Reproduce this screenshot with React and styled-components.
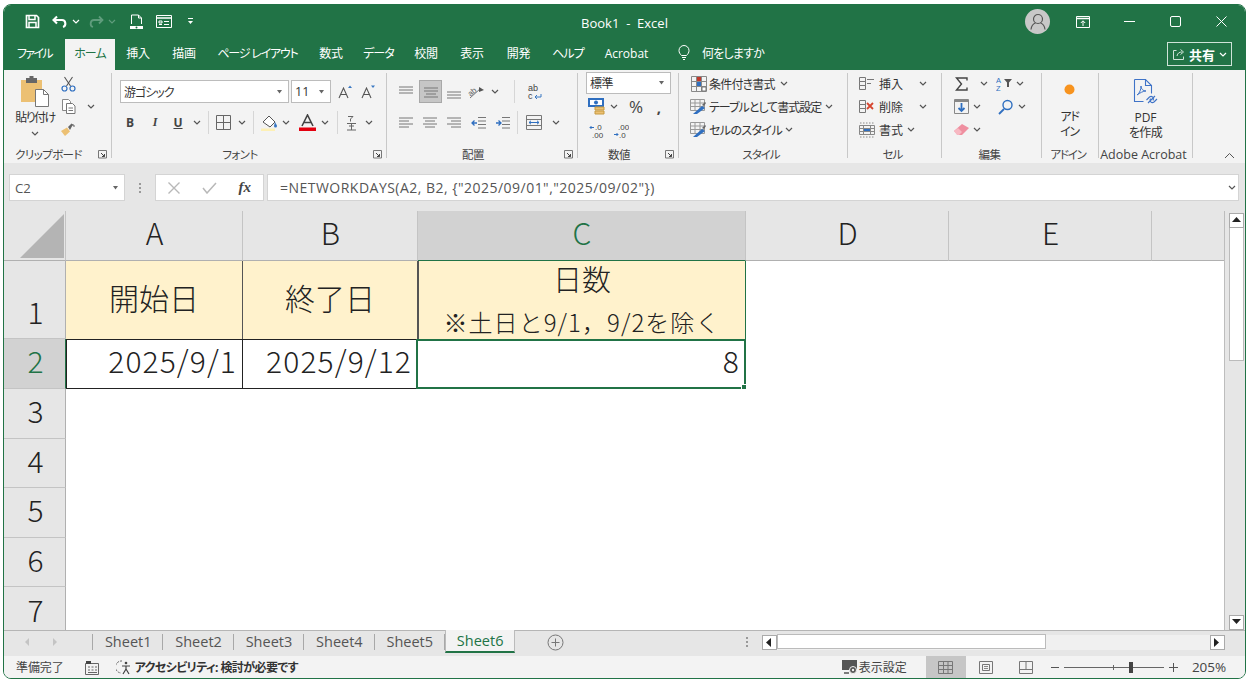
import React from "react";
import styled, { createGlobalStyle } from "styled-components";

const UI = '"Open Sans", "Noto Sans CJK JP", sans-serif';
const CELL = '"Noto Sans CJK JP", "Noto Sans", sans-serif';

const Global = createGlobalStyle`
  html, body { margin: 0; padding: 0; background: #fff; overflow: hidden; }
  body { width: 1249px; height: 681px; font-family: ${UI}; font-feature-settings: "palt"; }
  svg { display: block; flex: none; }
`;

const Win = styled.div`
  box-sizing: border-box; width: 1243px; height: 675px; margin: 4px 0 0 3px;
  border: 1px solid #217346; border-radius: 8px; overflow: hidden;
  display: flex; flex-direction: column; background: #f3f3f3;
`;
const TitleBar = styled.div`
  height: 33px; flex: none; background: #217346; display: flex; align-items: center; color: #fff; position: relative;
`;
const Qat = styled.div`display: flex; align-items: center; padding-left: 21px; flex: 1;`;
const Slot = styled.div`
  flex: none; width: ${p => p.$w || 16}px; margin-left: ${p => p.$ml || 0}px; height: 100%;
  display: flex; align-items: center; justify-content: center;
`;
const Tx = styled.span`flex: none; margin-left: ${p => p.$ml ?? 0}px; letter-spacing: ${p => p.$sp ?? 0}px;`;
const BookTitle = styled.div`
  position: absolute; left: 0; right: 0; top: 9px; text-align: center; font-size: 13px; color: #fff; pointer-events: none;
`;
const WinBtns = styled.div`display: flex; align-items: center; height: 100%; padding-right: 1px;`;
const Avatar = styled.div`
  width: 25px; height: 25px; border-radius: 50%; background: #c8c8c8; display: flex; align-items: center; justify-content: center; margin-right: 10px;
`;

const TabBar = styled.div`
  height: 32px; flex: none; background: #217346; display: flex; align-items: stretch; color: #fff; font-size: 12px; position: relative;
`;
const Tab = styled.div`
  flex: none; width: ${p => p.$w}px; display: flex; align-items: center; justify-content: center;
  letter-spacing: ${p => p.$sp ?? 0}px; padding-bottom: 3px; box-sizing: border-box; white-space: nowrap;
  margin-top: 1px;
  ${p => p.$on && "background:#f3f3f3;color:#217346;"}
`;
const Tell = styled.div`display: flex; align-items: center; gap: 12px; margin-left: 19px; padding-bottom: 3px; letter-spacing: -.8px;`;
const Share = styled.div`
  position: absolute; right: 13px; top: 4px; width: 65px; height: 24px; box-sizing: border-box;
  border: 1px solid #cfe3d8; display: flex; align-items: center; justify-content: center; gap: 4px;
  font-size: 13px; font-weight: 700; letter-spacing: 0;
`;

const Ribbon = styled.div`
  height: 93px; flex: none; background: #f3f3f3; display: flex; color: #333; font-size: 12px; position: relative;
`;
const Group = styled.div`
  flex: none; width: ${p => p.$w}px; box-sizing: border-box; height: 85px; margin-top: 3px;
  ${p => !p.$last && "border-right: 1px solid #c8c8c8;"}
  display: flex; flex-direction: column;
`;
const Body = styled.div`
  flex: 1; min-height: 0; display: flex; flex-direction: column;
  margin-top: ${p => p.$mt ?? 0}px;
  padding: ${p => p.$pt ?? 0}px 0 0 ${p => p.$pl ?? 0}px; gap: ${p => p.$gap ?? 0}px;
`;
const BodyRow = styled.div`flex: 1; min-height: 0; display: flex; padding-left: ${p => p.$pl ?? 0}px;`;
const Label = styled.div`
  flex: none; height: 16px; margin-bottom: -4px; display: grid; grid-template-columns: 1fr auto 1fr; align-items: center;
  font-size: ${p => p.$fs ?? 11.5}px; color: #444; padding-right: ${p => p.$launch ? 18 : 4}px; letter-spacing: ${p => p.$sp ?? -.6}px; white-space: nowrap;
`;
const Launcher = styled.div`justify-self: end; grid-column: 3; margin-right: -14px;`;
const Row = styled.div`
  display: flex; align-items: center; height: ${p => p.$h ?? 23}px; flex: none;
  letter-spacing: ${p => p.$sp ?? 0}px; white-space: nowrap;
`;
const Combo = styled.div`
  box-sizing: border-box; width: ${p => p.$w}px; height: ${p => p.$h ?? 23}px; margin-right: ${p => p.$mr ?? 0}px; flex: none;
  background: #fff; border: 1px solid #bcbcbc; display: flex; align-items: center; justify-content: space-between;
  padding: 0 5px 0 3px; font-size: ${p => p.$fs ?? 12}px; letter-spacing: ${p => p.$sp ?? 0}px; color: #333;
`;
const Sel = styled.div`
  width: 23px; height: 23px; box-sizing: border-box; background: #c6c6c6; border: 1px solid #a8a8a8;
  display: flex; align-items: center; justify-content: center; margin-left: ${p => p.$ml ?? 0}px; flex: none;
`;
const VSep = styled.div`width: 1px; height: 23px; background: #d6d6d6; flex: none; margin-left: ${p => p.$ml ?? 0}px; margin-right: ${p => p.$mr ?? 0}px;`;
const BoldTx = styled.span`font-weight: ${p => p.$w ?? 700}; font-size: ${p => p.$fs ?? 12}px; color: #444; font-family: ${p => p.$serif ? '"Liberation Serif", serif' : UI}; font-style: ${p => p.$i ? "italic" : "normal"}; text-decoration: ${p => p.$u ? "underline" : "none"};`;
const Big = styled.div`
  flex: none; width: ${p => p.$w}px; display: flex; flex-direction: column; align-items: center; text-align: center;
  font-size: 12px; line-height: 15px; letter-spacing: ${p => p.$sp ?? -.7}px; color: #333; padding-top: ${p => p.$pt ?? 0}px; white-space: nowrap;
`;
const Gutter = styled.div`height: ${p => p.$h}px; flex: none;`;
const Collapse = styled.div`position: absolute; right: 10px; bottom: 4px;`;

const FormulaBar = styled.div`
  height: 48px; flex: none; background: #e6e6e6; display: flex; padding: 11px 6px 10px 5px; box-sizing: border-box; align-items: stretch;
`;
const Fbox = styled.div`
  flex: ${p => p.$grow ? 1 : "none"}; width: ${p => p.$w ? p.$w + "px" : "auto"}; box-sizing: border-box; background: #fff; border: 1px solid #d4d4d4;
  margin-left: ${p => p.$ml ?? 0}px; display: flex; align-items: center; font-size: ${p => p.$fs ?? 13.2}px; letter-spacing: ${p => p.$sp ?? 0}px; color: #555; white-space: nowrap;
  ${p => p.$between && "justify-content: space-between;"} padding: 0 ${p => p.$pr ?? 5}px 0 ${p => p.$pl ?? 6}px;
`;
const Dots = styled.div`
  width: ${p => p.$w ?? 4}px; flex: none; display: flex; flex-direction: column; justify-content: center; align-items: center; gap: 2px; margin-left: ${p => p.$ml ?? 0}px;
  span { width: 2px; height: 2px; background: #999; display: block; }
`;

const Sheet = styled.div`height: 419px; flex: none; display: flex; background: #e6e6e6;`;
const Grid = styled.div`
  width: 1220px; flex: none; display: grid; background: #fff;
  grid-template-columns: 62px 177px 175px 328px 203px 203px 1fr;
  grid-template-rows: 50px 78px 50px 50px 49px 50px 49px 1fr;
  border-right: 1px solid #bdbdbd; box-sizing: content-box;
  font-feature-settings: normal;
`;
const Corner = styled.div`background: #e6e6e6; border-right: 1px solid #c4c4c4; border-bottom: 1px solid #b0b0b0; box-sizing: border-box; display: flex; justify-content: flex-end; align-items: flex-end; padding: 0 1px 2px 0;`;
const ColHead = styled.div`
  background: ${p => p.$on ? "#d2d2d2" : "#e6e6e6"}; color: ${p => p.$on ? "#217346" : "#222"};
  border-right: ${p => p.$plain ? "none" : "1px solid #c4c4c4"}; border-bottom: 1px solid ${p => p.$on ? "#217346" : "#b0b0b0"}; box-sizing: border-box;
  display: flex; align-items: center; justify-content: center; font: 300 30px ${CELL}; padding: 0 0 7px 1px;
`;
const RowHead = styled.div`
  background: ${p => p.$on ? "#d2d2d2" : "#e6e6e6"}; color: ${p => p.$on ? "#217346" : "#222"};
  border-right: 1px solid ${p => p.$on ? "#217346" : "#b0b0b0"}; border-bottom: 1px solid #c4c4c4; box-sizing: border-box;
  display: flex; align-items: center; justify-content: center; font: 300 30px ${CELL}; padding: 0 0 7px 2px;
  ${p => p.$low && "align-items: flex-end; padding-bottom: 5px;"}
`;
const HeadCell = styled.div`
  background: #fff2cc; box-sizing: border-box; border-right: 1px solid ${p => p.$sel ? "#217346" : "#555"};
  display: flex; flex-direction: column; align-items: center; justify-content: center; font: 300 30px ${CELL}; color: #222; padding-bottom: ${p => p.$sel ? 0 : 6}px;
  ${p => p.$sel && "border-left:1px solid #555;"}
`;
const HeadTop = styled.div`font-size: 29px; line-height: 36px; margin-top: -4px;`;
const HeadSub = styled.div`font-size: 24px; line-height: 30px; margin-top: 11px; white-space: nowrap; letter-spacing: 1.05px;`;
const DataCell = styled.div`
  background: #fff; box-sizing: border-box; border: solid #222; border-width: 1px 1px 1px ${p => p.$first ? 1 : 0}px;
  display: flex; align-items: center; justify-content: flex-end; padding-right: 5px; padding-bottom: 9px;
  font: 300 30px ${CELL}; letter-spacing: 1.1px; color: #222; position: relative;
`;
const Selection = styled.div`
  position: absolute; inset: -1px -1px -1px -2px; border: 2px solid #217346; pointer-events: none;
  &::after { content: ""; position: absolute; right: -3px; bottom: -3px; width: 4px; height: 4px; background: #217346; border: 1px solid #fff; }
`;
const Blank = styled.div`background: #fff;`;

const VScroll = styled.div`
  width: 21px; flex: none; display: flex; flex-direction: column; align-items: center; padding: 2px 0 0 1px; box-sizing: border-box;
`;
const ScrollBtn = styled.div`
  width: ${p => p.$w ?? 15}px; height: 15px; box-sizing: border-box; background: #fff; border: 1px solid #aaa; display: flex; align-items: center; justify-content: center; flex: none;
`;
const VThumb = styled.div`width: 15px; height: 133px; background: #fff; border: 1px solid #bbb; box-sizing: border-box; border-top: 0; flex: none;`;
const VTrack = styled.div`flex: 1; width: 15px;`;

const SheetTabs = styled.div`
  height: 26px; flex: none; background: #e6e6e6; border-top: 1px solid #b5b5b5; box-sizing: border-box; display: flex; align-items: stretch; font-size: 14.5px; color: #555;
`;
const Nav = styled.div`width: 89px; flex: none; display: flex; align-items: center; gap: 22px; padding-left: 21px; box-sizing: border-box; border-right: 1px solid #a8a8a8; margin: 3px 0 6px;`;
const STab = styled.div`
  flex: none; width: 70.4px; box-sizing: border-box; margin-top: 0; display: flex; align-items: center; justify-content: center;
  padding-bottom: 4px; position: relative;
  ${p => p.$on ? `color:#217346;background:#f3f3f3;border-bottom:2px solid #217346;height:23px;border-left:1px solid #bbb;border-right:1px solid #bbb;margin-top:-1px;padding-bottom:0;` : `&::after{content:"";position:absolute;right:0;top:3px;bottom:6px;width:1px;background:#a8a8a8;}`}
`;
const AddTab = styled.div`margin-left: 32px; width: 18px; display: flex; align-items: center; padding-bottom: 2px;`;
const HScroll = styled.div`
  margin-left: auto; width: 480px; flex: none; display: flex; align-items: center; padding-bottom: 3px; margin-right: 20px;
`;
const HTrack = styled.div`flex: 1; height: 15px; background: #f0f0f0; display: flex; border-top: 1px solid #e6e6e6;`;
const HThumb = styled.div`width: 269px; height: 15px; box-sizing: border-box; background: #fff; border: 1px solid #bbb; margin-top: -1px;`;

const Status = styled.div`
  flex: 1; min-height: 0; background: #f3f3f3; display: flex; align-items: center; font-size: 12px; color: #444; white-space: nowrap;
`;
const StatusText = styled.div`margin-left: ${p => p.$ml ?? 0}px; letter-spacing: ${p => p.$sp ?? 0}px; font-size: ${p => p.$fs ?? 12}px; font-weight: ${p => p.$b ? 700 : 400}; color: ${p => p.$b ? "#333" : "#444"};`;
const ViewBtn = styled.div`
  width: 40px; height: 100%; display: flex; align-items: center; justify-content: center; flex: none; ${p => p.$on && "background:#c6c6c6;"}
`;
const Slider = styled.div`
  width: 100px; height: 1px; background: #666; position: relative; margin: 0 5px 0 4px; flex: none;
  &::before { content: ""; position: absolute; left: 49px; top: -2px; width: 1px; height: 5px; background: #666; }
  &::after { content: ""; position: absolute; left: 65px; top: -5px; width: 4px; height: 11px; background: #444; }
`;

const I = ({ w = 16, h = 16, children }) => <svg width={w} height={h} viewBox={`0 0 ${w} ${h}`} fill="none">{children}</svg>;
const Chev = ({ c = "#555" }) => <I w={8} h={5}><path d="M1 1l3 3 3-3" stroke={c} strokeWidth="1.2" /></I>;
const Down = ({ c = "#666" }) => <I w={7} h={4}><path d="M1 0h5L3.500 3.500z" fill={c} /></I>;
const Launch = () => <I w={9} h={9}><path d="M.5 8V.5H8.500V8z" stroke="#777" /><path d="M3 3l3.500 3.500M6.500 4v2.500H4" stroke="#444" /></I>;
const hl = (y, x1, x2, c = "#777") => <path key={y + "-" + x1} d={`M${x1} ${y}H${x2}`} stroke={c} />;

const Save = () => <I w={15} h={15}><path d="M1.500 1.500h10l2 2v10h-12z" stroke="#fff" strokeWidth="1.700" /><path d="M4 1.500v4h6v-4M4 13.500v-5h7v5" stroke="#fff" strokeWidth="1.500" /></I>;
const Undo = ({ c = "#fff" }) => <I w={16} h={14}><path d="M5 1.500L1.500 5 5 8.500M2 5h8c4 0 4.500 6 1 7" stroke={c} strokeWidth="2.100" /></I>;
const Redo = () => <I w={16} h={14}><path d="M11 1.500L14.500 5 11 8.500M14 5H6c-4 0-4.500 6-1 7" stroke="#5f9c7c" strokeWidth="1.800" /></I>;
const Preview = () => <I w={13} h={16}><path d="M1.500 10V1h7l3 3v6M8.500 1v3h3" stroke="#fff" /><path d="M0 12h13v3H0z" fill="#fff" /><circle cx="6.500" cy="13.500" r="1" fill="#217346" /></I>;
const FormI = () => <I w={16} h={13}><path d="M.5.500h15v12H.5z" stroke="#fff" /><path d="M1 3h14" stroke="#fff" strokeWidth="1.500" /><path d="M3 6h3v2H3zM3 9.500h3M8 6.500h5M8 9.500h5" stroke="#fff" /></I>;
const QatMore = () => <I w={7} h={7}><path d="M1 .5h5" stroke="#fff" /><path d="M1 3h5L3.500 6z" fill="#fff" /></I>;
const User = () => <I w={16} h={17}><circle cx="8" cy="6" r="4.500" stroke="#555" strokeWidth="1.200" /><path d="M1 16.500c.5-4 3-6 4.500-6.500M15 16.500c-.5-4-3-6-4.500-6.500" stroke="#555" strokeWidth="1.200" /></I>;
const Display = () => <I w={14} h={12}><path d="M.5.500h13v11H.5z" stroke="#fff" /><path d="M1 2.500h12" stroke="#fff" strokeWidth="1.400" /><path d="M7 10V5M4.800 7L7 4.800 9.200 7" stroke="#fff" /></I>;
const Min = () => <I w={11} h={3}><path d="M0 1.500h11" stroke="#fff" /></I>;
const Max = () => <I w={11} h={11}><rect x=".5" y=".5" width="10" height="10" rx="1.500" stroke="#fff" /></I>;
const Close = () => <I w={11} h={11}><path d="M.5.500l10 10M10.500.500l-10 10" stroke="#fff" /></I>;
const Bulb = () => <I w={12} h={17}><path d="M3.500 11.500C2 10 1 8.500 1 6.500a5 5 0 0110 0c0 2-1 3.500-2.500 5zM4 13.500h4M5 15.500h2" stroke="#fff" /></I>;
const ShareI = () => <I w={13} h={13}><path d="M4.500 2.500h-3v9h10v-3M5 8c.5-3 2.500-4 5-4M8.500 1.500L11.500 4 8.500 6.500" stroke="#cfe3d8" /></I>;

const Paste = () => <I w={30} h={31}><path d="M1 4h21v22H1z" fill="#ecc073" /><path d="M6 2h11v5H6z" fill="#666" /><path d="M9.500 0h4v3h-4z" fill="#666" /><path d="M15.500 13.500h8l5 5v12h-13z" fill="#fff" stroke="#777" /><path d="M23.500 13.500v5h5" stroke="#777" /></I>;
const Cut = () => <I w={15} h={16}><path d="M3.500 1l6 9M11.500 1l-6 9" stroke="#555" strokeWidth="1.100" /><circle cx="3.500" cy="12.500" r="2.500" stroke="#2f6fc0" strokeWidth="1.200" /><circle cx="11.500" cy="12.500" r="2.500" stroke="#2f6fc0" strokeWidth="1.200" /></I>;
const Copy = () => <I w={15} h={15}><path d="M1.500.5h6l2 2v9h-8z" fill="#fff" stroke="#888" /><path d="M5.500 4.500h6l2.500 2.500v7.500H5.500z" fill="#fff" stroke="#777" />{hl(9, 7.5, 12)}{hl(11.5, 7.5, 12)}</I>;
const Brush = () => <I w={16} h={14}><path d="M1 8l6-3.500 3 4L5 13z" fill="#ecc073" /><path d="M8 4l3.500-3.500 1.500 1L10 7z" fill="#666" /><path d="M13 1v2M15 3h-2" stroke="#666" /></I>;
const AGrow = ({ up }) => <I w={14} h={14}><path d="M1 13L5.500 3 10 13M2.800 9.500h5.500" stroke="#555" strokeWidth="1.100" /><path d={up ? "M10 3l2-2.500L14 3z" : "M10 .5h4L12 3z"} fill="#3a78c2" /></I>;
const Borders = () => <I w={15} h={15}><path d="M.5.500h14v14H.5zM7.500 1v13M1 7.500h13" stroke="#666" /></I>;
const Fill = () => <I w={18} h={17}><path d="M2 8l6-6 6 6-5 5z" stroke="#555" fill="#fff" /><path d="M14 8c1 2 2 3 2 4a1.500 1.500 0 01-3 0" fill="#3a78c2" /><path d="M0 14.500h14V17H0z" fill="#fdf0b5" /></I>;
const FontColor = () => <I w={17} h={17}><path d="M3 12L8.500 1 14 12M5 8.500h7" stroke="#444" strokeWidth="1.600" /><path d="M0 13.500h17V17H0z" fill="#e3000f" /></I>;
const Phon = () => <I w={11} h={16}><path d="M2 1.500h5L4.500 4M4.500 4v2.500M1 8.500h9M3 11h5M1 15h9M5.500 8.500V15" stroke="#666" /></I>;

const Lines = ({ ys, xs }) => <I w={16} h={14}>{ys.map((y, i) => <path key={i} d={`M${xs[i][0]} ${y}H${xs[i][1]}`} stroke="#777" />)}</I>;
const Full = [1, 15];
const OrientI = () => <I w={18} h={15}><text x="1" y="10" fontSize="8" fill="#666" fontFamily="Liberation Sans" transform="rotate(-40 6 8)">ab</text><path d="M3 14L14 4" stroke="#777" /><path d="M12 3l5 3-5 2z" fill="#555" /></I>;
const Wrap = () => <I w={16} h={18}><text x="1" y="7.500" fontSize="9" fill="#444" fontFamily="Liberation Sans">ab</text><text x="1" y="16" fontSize="9" fill="#444" fontFamily="Liberation Sans">c</text><path d="M14 11v3H8M10 12l-2 2 2 2" stroke="#3a78c2" /></I>;
const Indent = ({ out }) => <I w={16} h={14}><path d="M7 1.500h8M7 5h8M7 8.500h8M7 12h8" stroke="#777" /><path d={out ? "M6 7H1M3.500 4.500L1 7l2.500 2.500" : "M1 7h5M3.500 4.500L6 7 3.500 9.500"} stroke="#2f6fc0" strokeWidth="1.300" /></I>;
const Merge = () => <I w={16} h={15}><path d="M.5.500h15v14H.5zM1 4.500h14M1 10.500h14" stroke="#777" /><path d="M3 7.500h10M5 5.800L3 7.500l2 1.700M11 5.800l2 1.700-2 1.700" stroke="#2f6fc0" /></I>;
const Account = () => <I w={17} h={17}><path d="M0 0h16v9H0z" fill="#2f6fc0" /><path d="M2 2h12v5H2z" fill="#fff" /><circle cx="8" cy="4.500" r="2" fill="#2f6fc0" /><path d="M7 9h9v3H7zM7 13h9v3H7z" fill="#ecc073" stroke="#c69a40" /></I>;
const Dec = ({ top, bot, left }) => <I w={16} h={16}><text x={left ? 6 : 5} y="7" fontSize="8" fill="#444" fontFamily="Liberation Sans">{top}</text><text x={left ? 3 : 6} y="14.500" fontSize="8" fill="#444" fontFamily="Liberation Sans">{bot}</text><path d={left ? "M5 4.500H1M2.500 3L1 4.500 2.500 6" : "M1 11.500h4M3.500 10L5 11.500 3.500 13"} stroke="#2f6fc0" /></I>;
const Cond = () => <I w={16} h={16}><path d="M.5.500h15v15H.5zM1 5.500h14M1 10.500h14M5.500 1v14M10.500 1v14" stroke="#888" /><path d="M6 1h4v4H6z" fill="#c0392b" /><path d="M6 6h4v4H6z" fill="#2f6fc0" /><path d="M11 11h4v4h-4z" fill="#fff" stroke="#777" /></I>;
const TableI = () => <I w={17} h={16}><path d="M.5.500h14v11H.5zM1 4h13M1 7.500h13M5 1v10M10 1v10" stroke="#999" /><path d="M3 15l9-8 3 2-8 6z" fill="#2f6fc0" /><path d="M12 6l3-3 1 1-2 3z" fill="#666" /></I>;
const CellI = ({ kind }) => <I w={16} h={16}><path d="M.5 1.500h6v4h-6zM.5 5.500h6v4h-6zM.5 9.500h6v4h-6z" stroke="#777" />{kind === "ins" ? <path d="M8 3.500h7M8 7.500h4" stroke="#777" /> : <path d="M8 4l6 6M14 4l-6 6" stroke="#d6452f" strokeWidth="1.800" />}</I>;
const FormatI = () => <I w={16} h={16}><path d="M.5 3.500h15v9H.5zM.5 6.500h15M.5 9.500h15M4.500 3v10M11.500 3v10" stroke="#888" /><path d="M5 7h6v2H5z" fill="#2f6fc0" /><path d="M1 1h14M1 15h14" stroke="#888" strokeDasharray="1.500 1.500" /></I>;
const Sigma = () => <I w={13} h={14}><path d="M12 3.500V1H1.500l5 6-5 6H12v-2.500" stroke="#444" strokeWidth="1.400" /></I>;
const SortI = () => <I w={17} h={16}><text x="0" y="7" fontSize="7.500" fill="#2f6fc0" fontFamily="Liberation Sans">A</text><text x="0" y="15" fontSize="7.500" fill="#2f6fc0" fontFamily="Liberation Sans">Z</text><path d="M8 3h8l-3 3.500V11h-2V6.500z" fill="#555" /></I>;
const FillDown = () => <I w={15} h={15}><path d="M.5.500h14v14H.5z" stroke="#888" /><path d="M1 1h13v2H1z" fill="#888" /><path d="M7.500 4v8M4.500 9l3 3 3-3" stroke="#2f6fc0" strokeWidth="1.800" /></I>;
const Find = () => <I w={15} h={16}><circle cx="9.500" cy="6" r="4.500" stroke="#2f6fc0" strokeWidth="1.400" /><path d="M6 10l-5 5" stroke="#2f6fc0" strokeWidth="1.800" /></I>;
const Eraser = () => <I w={15} h={13}><path d="M0 8l8-7 7 4-7 7H4z" fill="#ef8fa0" /><path d="M0 8l4-3 4 4-3 3H3z" fill="#f7b8c2" /></I>;
const PdfI = () => <I w={27} h={28}><path d="M2.500 1.500h11l6 6v8M2.500 1.500v22h9" stroke="#3f73c7" strokeWidth="1.100" /><path d="M13.500 1.500v6h6" stroke="#3f73c7" strokeWidth="1.100" /><path d="M5 17c3-2 4-6 4-9 0 3 2 5 5 5-3 0-6 2-9 4z" stroke="#3f73c7" /><path d="M16 25l7-7M14.500 22l3-3a2.500 2.500 0 013.500 3.500M25 21l-3 3a2.500 2.500 0 01-3.500-3.500" stroke="#3f73c7" strokeWidth="1.100" /></I>;
const Triangle = () => <I w={44} h={44}><path d="M44 0v44H0z" fill="#b4b4b4" /></I>;
const Fx = () => <BoldTx $serif $i $w={700} $fs={15}>fx</BoldTx>;
const Xm = () => <I w={14} h={14}><path d="M1.500 1.500l11 11M12.500 1.500l-11 11" stroke="#b8b8b8" strokeWidth="1.400" /></I>;
const Ck = () => <I w={15} h={12}><path d="M1 6l4 5L14 1" stroke="#b8b8b8" strokeWidth="1.500" /></I>;
const Tri = ({ d, c = "#222" }) => {
  const m = { up: "M0 6h9L4.500 1z", down: "M0 1h9L4.500 6z", left: "M6 0v9L1 4.500z", right: "M1 0v9l5-4.500z" };
  return <I w={9} h={9}><path d={m[d]} fill={c} /></I>;
};
const NavA = ({ r }) => <I w={5} h={8}><path d={r ? "M1 0v8l4-4z" : "M4 0v8L0 4z"} fill="#c4c4c4" /></I>;
const Plus = () => <I w={17} h={17}><circle cx="8.500" cy="8.500" r="7.500" stroke="#777" /><path d="M4.500 8.500h8M8.500 4.500v8" stroke="#777" /></I>;
const Macro = () => <I w={14} h={15}><path d="M.5 3.500h13v11H.5z" stroke="#666" /><path d="M1 1h5v3H1z" fill="#444" /><path d="M3 7h2M6.500 7h2M10 7h2M3 10h2M6.500 10h2M10 10h2M3 12.500h9" stroke="#666" /></I>;
const Access = () => <I w={16} h={15}><path d="M6 1a6 6 0 00-1 12" stroke="#666" strokeDasharray="2 1" /><circle cx="10" cy="3" r="1.300" fill="#444" /><path d="M6 6h8M10 6v3l-3 5M10 9l3 5" stroke="#444" strokeWidth="1.200" /></I>;
const DispSet = () => <I w={17} h={15}><path d="M0 0h15v10H0z" fill="#555" /><circle cx="11" cy="10" r="3.500" fill="#555" stroke="#f3f3f3" /><circle cx="11" cy="10" r="1.200" fill="#f3f3f3" /><path d="M2 13h5" stroke="#555" strokeWidth="1.500" /></I>;
const VNormal = () => <I w={15} h={13}><path d="M.5.500h14v12H.5zM.5 4.500h14M.5 8.500h14M5.500 1v12M10 1v12" stroke="#777" /></I>;
const VPage = () => <I w={14} h={13}><path d="M.5.500h13v12H.5z" stroke="#777" /><path d="M3.500 3.500h7v6h-7z" stroke="#777" /><path d="M5 5.500h4M5 7.500h4" stroke="#888" /></I>;
const VBreak = () => <I w={14} h={13}><path d="M.5.500h13v12H.5zM.5 8.500h13M7 1v7" stroke="#777" /></I>;
const Up = () => <I w={11} h={7}><path d="M1 6l4.500-4.500L10 6" stroke="#555" /></I>;

const tabs = [
  ["ファイル", 61, -1.6], ["ホーム", 50, -.9, true], ["挿入", 46], ["描画", 46], ["ページ レイアウト", 101, -1.2], ["数式", 46],
  ["データ", 49, -.9], ["校閲", 46], ["表示", 46], ["開発", 47], ["ヘルプ", 52, -.9], ["Acrobat", 65, 0],
];

export default function App() {
  return (
    <>
      <Global />
      <Win>
        <TitleBar>
          <Qat>
            <Slot $w={15}><Save /></Slot>
            <Slot $w={16} $ml={12}><Undo /></Slot>
            <Slot $w={8} $ml={4}><Chev c="#fff" /></Slot>
            <Slot $w={16} $ml={8}><Redo /></Slot>
            <Slot $w={8} $ml={4}><Chev c="#5f9c7c" /></Slot>
            <Slot $w={13} $ml={14}><Preview /></Slot>
            <Slot $w={16} $ml={13}><FormI /></Slot>
            <Slot $w={7} $ml={15}><QatMore /></Slot>
          </Qat>
          <BookTitle>Book1&nbsp; -&nbsp; Excel</BookTitle>
          <WinBtns>
            <Avatar><User /></Avatar>
            <Slot $w={46}><Display /></Slot>
            <Slot $w={46}><Min /></Slot>
            <Slot $w={46}><Max /></Slot>
            <Slot $w={46}><Close /></Slot>
          </WinBtns>
        </TitleBar>

        <TabBar>
          {tabs.map(([t, w, sp, on]) => <Tab key={t} $w={w} $sp={sp ?? -.3} $on={on}>{t}</Tab>)}
          <Tell><Bulb /><span>何をしますか</span></Tell>
          <Share><ShareI /><span>共有</span><Chev c="#fff" /></Share>
        </TabBar>

        <Ribbon>
          <Group $w={108}>
            <BodyRow $pl={8}>
              <Big $w={46} $pt={3} $sp={-1.5}>
                <Paste />
                <Gutter $h={3} />
                貼り付け
                <Gutter $h={6} />
                <Chev />
              </Big>
              <Body $mt={-1}>
                <Row><Slot $w={16} $ml={2}><Cut /></Slot></Row>
                <Row><Slot $w={16} $ml={2}><Copy /></Slot><Slot $w={8} $ml={11}><Chev /></Slot></Row>
                <Row><Slot $w={16} $ml={2}><Brush /></Slot></Row>
              </Body>
            </BodyRow>
            <Label $launch><span /><span>クリップボード</span><Launcher><Launch /></Launcher></Label>
          </Group>

          <Group $w={275}>
            <Body $pt={7} $pl={8} $gap={8}>
              <Row>
                <Combo $w={169} $mr={2} $sp={-1}>游ゴシック<Down /></Combo>
                <Combo $w={40} $fs={12.5}>11<Down /></Combo>
                <Slot $w={14} $ml={7}><AGrow up /></Slot>
                <Slot $w={14} $ml={9}><AGrow /></Slot>
              </Row>
              <Row>
                <Slot $w={20}><BoldTx $fs={12}>B</BoldTx></Slot>
                <Slot $w={20} $ml={5}><BoldTx $fs={12} $serif $i>I</BoldTx></Slot>
                <Slot $w={16} $ml={5}><BoldTx $fs={12} $u>U</BoldTx></Slot>
                <Slot $w={8} $ml={7}><Chev /></Slot>
                <VSep $ml={7} $mr={7} />
                <Slot $w={15}><Borders /></Slot>
                <Slot $w={8} $ml={7}><Chev /></Slot>
                <VSep $ml={7} $mr={7} />
                <Slot $w={18}><Fill /></Slot>
                <Slot $w={8} $ml={3}><Chev /></Slot>
                <Slot $w={17} $ml={9}><FontColor /></Slot>
                <Slot $w={8} $ml={5}><Chev /></Slot>
                <VSep $ml={8} $mr={8} />
                <Slot $w={11}><Phon /></Slot>
                <Slot $w={8} $ml={8}><Chev /></Slot>
              </Row>
            </Body>
            <Label $launch><span /><span>フォント</span><Launcher><Launch /></Launcher></Label>
          </Group>

          <Group $w={191}>
            <Body $pt={7} $pl={11} $gap={8}>
              <Row>
                <Slot $w={16}><Lines ys={[2, 5, 8]} xs={[Full, Full, Full]} /></Slot>
                <Sel $ml={5}><Lines ys={[3, 6, 9, 12]} xs={[Full, Full, [3, 13], Full]} /></Sel>
                <Slot $w={16} $ml={4}><Lines ys={[7, 10, 13]} xs={[Full, Full, Full]} /></Slot>
                <Slot $w={18} $ml={5}><OrientI /></Slot>
                <Slot $w={8} $ml={6}><Chev /></Slot>
                <VSep $ml={15} $mr={12} />
                <Slot $w={16}><Wrap /></Slot>
              </Row>
              <Row>
                <Slot $w={16}><Lines ys={[2, 5, 8, 11]} xs={[Full, [1, 11], Full, [1, 11]]} /></Slot>
                <Slot $w={16} $ml={8}><Lines ys={[2, 5, 8, 11]} xs={[Full, [3, 13], Full, [3, 13]]} /></Slot>
                <Slot $w={16} $ml={8}><Lines ys={[2, 5, 8, 11]} xs={[Full, [5, 15], Full, [5, 15]]} /></Slot>
                <Slot $w={16} $ml={9}><Indent out /></Slot>
                <Slot $w={16} $ml={8}><Indent /></Slot>
                <VSep $ml={6} $mr={8} />
                <Slot $w={16}><Merge /></Slot>
                <Slot $w={8} $ml={10}><Chev /></Slot>
              </Row>
            </Body>
            <Label $launch><span /><span>配置</span><Launcher><Launch /></Launcher></Label>
          </Group>

          <Group $w={101}>
            <Body $pl={8} $mt={-1}>
              <Combo $w={85} $h={22} $sp={-.5}>標準<Down /></Combo>
              <Row $h={25}>
                <Slot $w={17} $ml={2}><Account /></Slot>
                <Slot $w={8} $ml={5}><Chev /></Slot>
                <Slot $w={16} $ml={10}><BoldTx $w={400} $fs={17}>%</BoldTx></Slot>
                <Slot $w={8} $ml={11}><BoldTx $fs={15}>,</BoldTx></Slot>
              </Row>
              <Row>
                <Slot $w={16} $ml={3}><Dec top=".0" bot=".00" left /></Slot>
                <Slot $w={16} $ml={8}><Dec top=".00" bot=".0" /></Slot>
              </Row>
            </Body>
            <Label $launch><span /><span>数値</span><Launcher><Launch /></Launcher></Label>
          </Group>

          <Group $w={169}>
            <Body $pl={11} $mt={-1}>
              <Row><Slot $w={16} $ml={1}><Cond /></Slot><Tx $ml={2} $sp={-.8}>条件付き書式</Tx><Slot $w={8} $ml={5}><Chev /></Slot></Row>
              <Row><Slot $w={17}><TableI /></Slot><Tx $ml={2} $sp={-1}>テーブルとして書式設定</Tx><Slot $w={8} $ml={4}><Chev /></Slot></Row>
              <Row><Slot $w={17}><TableI /></Slot><Tx $ml={2} $sp={-.6}>セルのスタイル</Tx><Slot $w={8} $ml={3}><Chev /></Slot></Row>
            </Body>
            <Label $sp={-1}><span /><span>スタイル</span></Label>
          </Group>

          <Group $w={94}>
            <Body $pl={11} $mt={-1}>
              <Row><Slot $w={16}><CellI kind="ins" /></Slot><Slot $w={24} $ml={4}>挿入</Slot><Slot $w={8} $ml={16}><Chev /></Slot></Row>
              <Row><Slot $w={16}><CellI /></Slot><Slot $w={24} $ml={4}>削除</Slot><Slot $w={8} $ml={16}><Chev /></Slot></Row>
              <Row><Slot $w={16}><FormatI /></Slot><Slot $w={24} $ml={4}>書式</Slot><Slot $w={8} $ml={4}><Chev /></Slot></Row>
            </Body>
            <Label $sp={-1}><span /><span>セル</span></Label>
          </Group>

          <Group $w={100}>
            <Body $pl={12} $mt={-1}>
              <Row><Slot $w={15}><Sigma /></Slot><Slot $w={8} $ml={11}><Chev /></Slot><Slot $w={17} $ml={8}><SortI /></Slot><Slot $w={8} $ml={3}><Chev /></Slot></Row>
              <Row><Slot $w={15}><FillDown /></Slot><Slot $w={8} $ml={4}><Chev /></Slot><Slot $w={15} $ml={17}><Find /></Slot><Slot $w={8} $ml={5}><Chev /></Slot></Row>
              <Row><Slot $w={15}><Eraser /></Slot><Slot $w={8} $ml={4}><Chev /></Slot></Row>
            </Body>
            <Label><span /><span>編集</span></Label>
          </Group>

          <Group $w={57}>
            <Body>
              <Big $w={55} $pt={11} $sp={-1.3}>
                <I w={11} h={11}><circle cx="5.500" cy="5.500" r="5" fill="#f7931e" /></I>
                <Gutter $h={14} />
                アド
                <br />
                イン
              </Big>
            </Body>
            <Label $sp={-1.2}><span /><span>アドイン</span></Label>
          </Group>

          <Group $w={94}>
            <Body>
              <Big $w={93} $pt={5} $sp={0}>
                <PdfI />
                <Gutter $h={4} />
                PDF
                <Tx $sp={-.6}>を作成</Tx>
              </Big>
            </Body>
            <Label $sp={0} $fs={12.5}><span /><span>Adobe Acrobat</span></Label>
          </Group>
          <Collapse><Up /></Collapse>
        </Ribbon>

        <FormulaBar>
          <Fbox $w={116} $between $pr={5} $pl={5}><span>C2</span><Down /></Fbox>
          <Dots $w={30}><span /><span /><span /></Dots>
          <Fbox $w={109} $pl={11} $pr={12} $between><Xm /><Ck /><Fx /></Fbox>
          <Fbox $grow $ml={3} $between $pl={12} $pr={2} $fs={14} $sp={.48}>
            <span>=NETWORKDAYS(A2, B2, {'{'}"2025/09/01","2025/09/02"{'}'})</span><Chev />
          </Fbox>
        </FormulaBar>

        <Sheet>
          <Grid>
            <Corner><Triangle /></Corner>
            <ColHead>A</ColHead>
            <ColHead>B</ColHead>
            <ColHead $on>C</ColHead>
            <ColHead>D</ColHead>
            <ColHead>E</ColHead>
            <ColHead $plain />

            <RowHead $low>1</RowHead>
            <HeadCell>開始日</HeadCell>
            <HeadCell>終了日</HeadCell>
            <HeadCell $sel>
              <HeadTop>日数</HeadTop>
              <HeadSub>※土日と9/1，9/2を除く</HeadSub>
            </HeadCell>
            <Blank /><Blank /><Blank />

            <RowHead $on>2</RowHead>
            <DataCell $first>2025/9/1</DataCell>
            <DataCell>2025/9/12</DataCell>
            <DataCell>8<Selection /></DataCell>
            <Blank /><Blank /><Blank />

            {[3, 4, 5, 6, 7].map(n => (
              <React.Fragment key={n}>
                <RowHead>{n}</RowHead>
                <Blank /><Blank /><Blank /><Blank /><Blank /><Blank />
              </React.Fragment>
            ))}
          </Grid>
          <VScroll>
            <ScrollBtn><Tri d="up" /></ScrollBtn>
            <VThumb />
            <VTrack />
            <ScrollBtn><Tri d="down" /></ScrollBtn>
          </VScroll>
        </Sheet>

        <SheetTabs>
          <Nav><NavA /><NavA r /></Nav>
          {["Sheet1", "Sheet2", "Sheet3", "Sheet4", "Sheet5"].map(s => <STab key={s}>{s}</STab>)}
          <STab $on>Sheet6</STab>
          <AddTab><Plus /></AddTab>
          <HScroll>
            <Dots $w={4}><span /><span /><span /></Dots>
            <Slot $w={13} />
            <ScrollBtn><Tri d="left" /></ScrollBtn>
            <HTrack><HThumb /></HTrack>
            <ScrollBtn><Tri d="right" /></ScrollBtn>
          </HScroll>
        </SheetTabs>

        <Status>
          <StatusText $ml={12} $sp={-.1}>準備完了</StatusText>
          <Slot $w={14} $ml={21}><Macro /></Slot>
          <Slot $w={16} $ml={17}><Access /></Slot>
          <StatusText $ml={3} $b $sp={-.6}>アクセシビリティ: 検討が必要です</StatusText>
          <Slot $w={17} $ml={544}><DispSet /></Slot>
          <StatusText>表示設定</StatusText>
          <Slot $w={19} />
          <ViewBtn $on><VNormal /></ViewBtn>
          <ViewBtn><VPage /></ViewBtn>
          <ViewBtn><VBreak /></ViewBtn>
          <Slot $w={10} $ml={4}><I w={8} h={3}><path d="M0 1.500h8" stroke="#555" /></I></Slot>
          <Slider />
          <Slot $w={10}><I w={9} h={9}><path d="M0 4.500h9M4.500 0v9" stroke="#555" /></I></Slot>
          <StatusText $ml={13} $fs={13.5}>205%</StatusText>
        </Status>
      </Win>
    </>
  );
}
